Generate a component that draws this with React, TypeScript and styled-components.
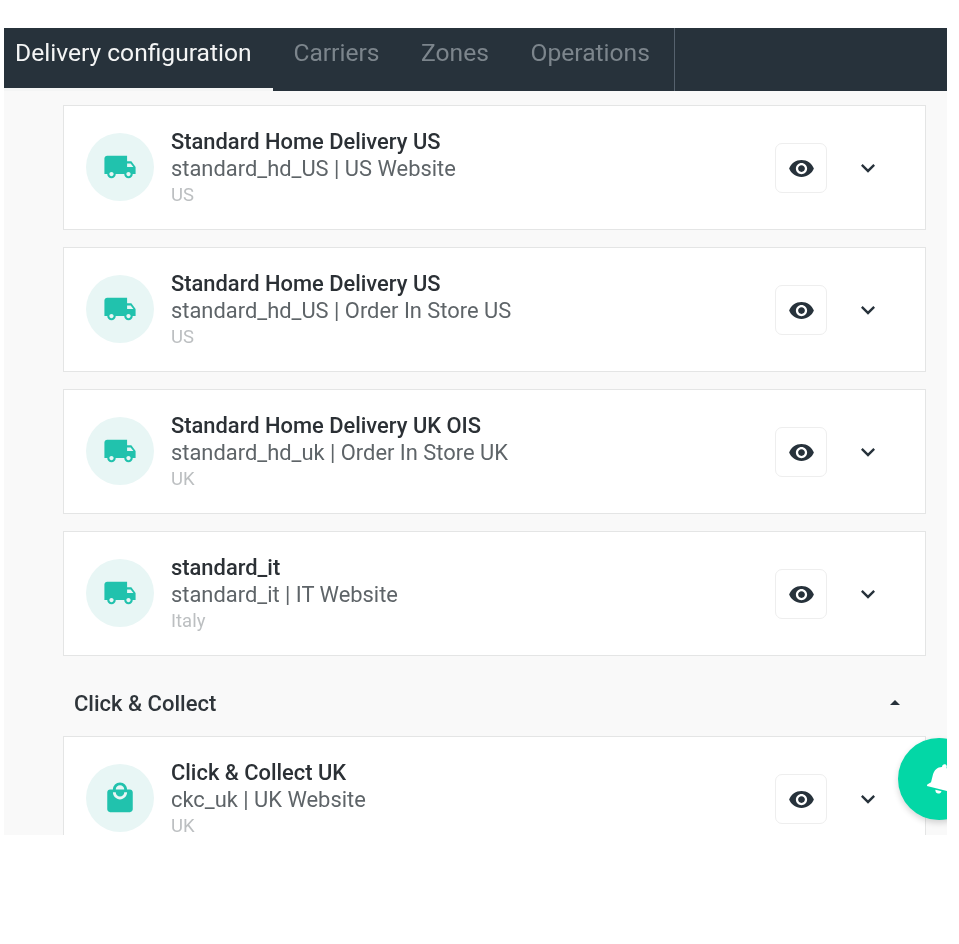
import React from "react";
import styled, { createGlobalStyle } from "styled-components";
import {
  MdLocalShipping,
  MdLocalMall,
  MdVisibility,
  MdKeyboardArrowDown,
  MdArrowDropUp,
  MdNotifications,
} from "react-icons/md";

const Global = createGlobalStyle`
  html, body { margin: 0; padding: 0; background: #fff; }
  body { font-family: Roboto, "Liberation Sans", sans-serif; }
`;

const Page = styled.div`
  width: 959px;
  height: 944px;
  padding: 28px 12px 0 4px;
  box-sizing: border-box;
`;

const Frame = styled.div`
  position: relative;
  height: 807px;
  overflow: hidden;
  background: #f9f9f9;
  filter: blur(0.4px);
`;

const TabBar = styled.nav`
  display: flex;
  height: 63px;
  background: #27323b;
`;

const TabList = styled.div`
  display: flex;
  height: 100%;
  border-right: 1px solid #56626e;
  padding-right: 3px;
`;

const Tab = styled.div<{ $active?: boolean }>`
  display: flex;
  align-items: center;
  height: 100%;
  box-sizing: border-box;
  padding: 0 ${(p) => (p.$active ? "21px" : "20.8px")} 11px ${(p) => (p.$active ? "11px" : "20.8px")};
  font-size: 24.6px;
  color: ${(p) => (p.$active ? "#f4f5f5" : "#7c858c")};
  border-bottom: 3px solid ${(p) => (p.$active ? "#f4f5f5" : "transparent")};
`;

const Content = styled.main`
  padding: 14px 21px 0 59px;
`;

const CardList = styled.div`
  display: flex;
  flex-direction: column;
  gap: 17px;
`;

const Card = styled.article`
  display: flex;
  align-items: center;
  height: 125px;
  flex: none;
  box-sizing: border-box;
  padding: 0 42px 1px 22px;
  background: #fff;
  border: 1px solid #e4e5e5;
`;

const IconCircle = styled.div`
  display: flex;
  align-items: center;
  justify-content: center;
  flex: none;
  width: 68px;
  height: 68px;
  border-radius: 50%;
  background: #e8f6f5;
  color: #21c2ad;
  font-size: 34px;
`;

const Info = styled.div`
  flex: 1;
  margin-left: 17px;
  padding-top: 2px;
  line-height: 27px;
`;

const Title = styled.div`
  font-size: 21.9px;
  font-weight: 500;
  color: #2b3035;
`;

const Subtitle = styled.div`
  font-size: 21.9px;
  color: #5e6468;
`;

const Region = styled.div`
  font-size: 18.5px;
  line-height: 26px;
  color: #bcbfc1;
`;

const ViewButton = styled.button`
  display: flex;
  align-items: center;
  justify-content: center;
  width: 52px;
  height: 50px;
  margin-top: 2px;
  padding: 0;
  background: #fff;
  border: 1px solid #eeeeee;
  border-radius: 7px;
  color: #27323b;
  font-size: 27px;
`;

const Chevron = styled.div`
  display: flex;
  align-items: center;
  justify-content: center;
  width: 30px;
  margin: 2px 0 0 26px;
  color: #27323b;
  font-size: 28px;
`;

const SectionHeader = styled.header`
  display: flex;
  align-items: center;
  justify-content: space-between;
  height: 80px;
  box-sizing: border-box;
  padding: 14px 19px 0 11px;
  font-size: 22px;
  font-weight: 500;
  color: #2f353a;
  svg { font-size: 24px; color: #27323b; }
`;

const Fab = styled.div`
  position: absolute;
  top: 710px;
  right: -33px;
  display: flex;
  align-items: center;
  justify-content: center;
  width: 82px;
  height: 82px;
  border-radius: 50%;
  background: #03d7a6;
  box-shadow: 0 3px 6px rgba(0, 0, 0, 0.16);
  color: #fff;
  svg { font-size: 37px; transform: translate(2px, -1px) rotate(14deg); }
`;

type Item = { title: string; sub: string; region: string; icon: React.ReactNode };

const truck = <MdLocalShipping />;
const delivery: Item[] = [
  { title: "Standard Home Delivery US", sub: "standard_hd_US | US Website", region: "US", icon: truck },
  { title: "Standard Home Delivery US", sub: "standard_hd_US | Order In Store US", region: "US", icon: truck },
  { title: "Standard Home Delivery UK OIS", sub: "standard_hd_uk | Order In Store UK", region: "UK", icon: truck },
  { title: "standard_it", sub: "standard_it | IT Website", region: "Italy", icon: truck },
];

const ConfigCard = ({ item }: { item: Item }) => (
  <Card>
    <IconCircle>{item.icon}</IconCircle>
    <Info>
      <Title>{item.title}</Title>
      <Subtitle>{item.sub}</Subtitle>
      <Region>{item.region}</Region>
    </Info>
    <ViewButton aria-label="View">
      <MdVisibility />
    </ViewButton>
    <Chevron>
      <MdKeyboardArrowDown />
    </Chevron>
  </Card>
);

export default function App() {
  return (
    <Page>
      <Global />
      <Frame>
        <TabBar>
          <TabList>
            <Tab $active>Delivery configuration</Tab>
            <Tab>Carriers</Tab>
            <Tab>Zones</Tab>
            <Tab>Operations</Tab>
          </TabList>
        </TabBar>
        <Content>
          <CardList>
            {delivery.map((item, i) => (
              <ConfigCard key={i} item={item} />
            ))}
          </CardList>
          <SectionHeader>
            <span>Click &amp; Collect</span>
            <MdArrowDropUp />
          </SectionHeader>
          <ConfigCard
            item={{ title: "Click & Collect UK", sub: "ckc_uk | UK Website", region: "UK", icon: <MdLocalMall /> }}
          />
        </Content>
        <Fab>
          <MdNotifications />
        </Fab>
      </Frame>
    </Page>
  );
}
